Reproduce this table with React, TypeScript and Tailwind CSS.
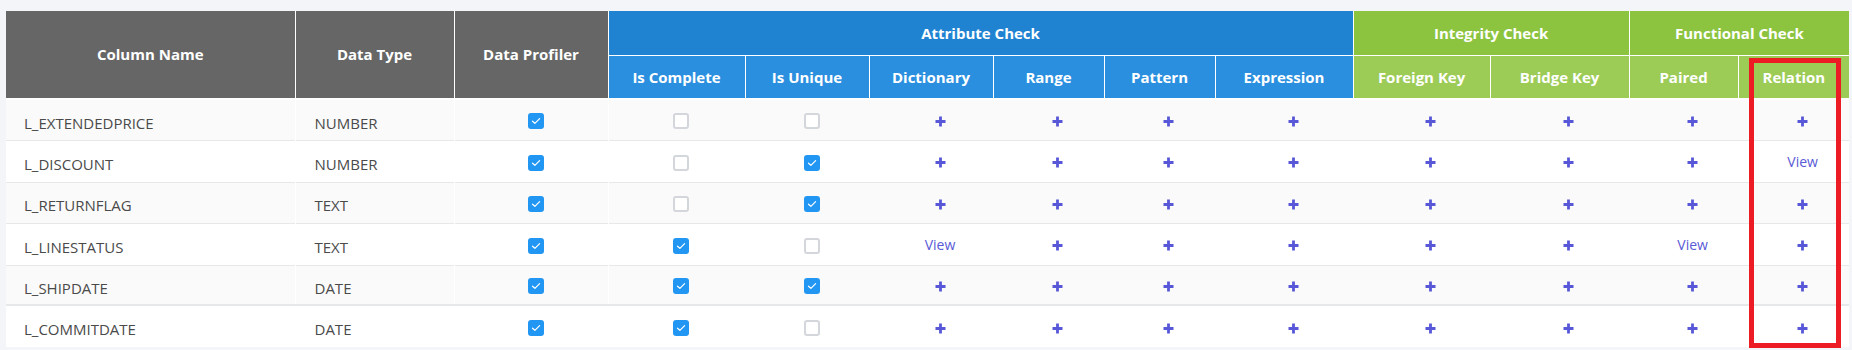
import React from 'react';

type Cell = 'on' | 'off' | 'plus' | 'view';

interface Row {
  name: string;
  type: string;
  cells: Cell[];
}

// widths in px, measured off the reference
const widths = [289, 159, 154, 137, 124, 124, 111, 111, 138, 137, 139, 109, 111];

const rows: Row[] = [
  { name: 'L_EXTENDEDPRICE', type: 'NUMBER', cells: ['on', 'off', 'off', 'plus', 'plus', 'plus', 'plus', 'plus', 'plus', 'plus', 'plus'] },
  { name: 'L_DISCOUNT', type: 'NUMBER', cells: ['on', 'off', 'on', 'plus', 'plus', 'plus', 'plus', 'plus', 'plus', 'plus', 'view'] },
  { name: 'L_RETURNFLAG', type: 'TEXT', cells: ['on', 'off', 'on', 'plus', 'plus', 'plus', 'plus', 'plus', 'plus', 'plus', 'plus'] },
  { name: 'L_LINESTATUS', type: 'TEXT', cells: ['on', 'on', 'off', 'view', 'plus', 'plus', 'plus', 'plus', 'plus', 'view', 'plus'] },
  { name: 'L_SHIPDATE', type: 'DATE', cells: ['on', 'on', 'on', 'plus', 'plus', 'plus', 'plus', 'plus', 'plus', 'plus', 'plus'] },
  { name: 'L_COMMITDATE', type: 'DATE', cells: ['on', 'on', 'off', 'plus', 'plus', 'plus', 'plus', 'plus', 'plus', 'plus', 'plus'] },
];

// row pitch in the reference is ~41.6px, so alternate
const rowHeights = ['h-[41px]', 'h-[42px]', 'h-[41px]', 'h-[42px]', 'h-[40px]', 'h-[42px]'];

const Checkbox = ({ checked }: { checked: boolean }) =>
  checked ? (
    <span className="inline-flex w-4 h-4 rounded-[3px] bg-[#2196f3] items-center justify-center align-middle">
      <svg width="10" height="8" viewBox="0 0 10 8" fill="none">
        <path d="M1.5 4.2 L3.9 6.3 L8.6 1.6" stroke="#ffffff" strokeWidth="1.2" strokeLinecap="round" strokeLinejoin="round" />
      </svg>
    </span>
  ) : (
    <span className="inline-block w-4 h-4 rounded-[3px] bg-white border-2 border-[#d3d6db] align-middle" />
  );

const Plus = () => (
  <svg width="11" height="11" viewBox="0 0 11 11" className="inline-block align-middle">
    <path d="M5.5 0.5v10M0.5 5.5h10" stroke="#5757d8" strokeWidth="2.8" />
  </svg>
);

const renderCell = (c: Cell) => {
  if (c === 'on') return <Checkbox checked />;
  if (c === 'off') return <Checkbox checked={false} />;
  if (c === 'view') return <span className="text-[14px] text-[#5a5ad6]">View</span>;
  return <Plus />;
};

const subBlue = ['Is Complete', 'Is Unique', 'Dictionary', 'Range', 'Pattern', 'Expression'];
const subGreen1 = ['Foreign Key', 'Bridge Key'];
const subGreen2 = ['Paired', 'Relation'];

export default function App() {
  return (
    <div className="relative min-h-screen bg-[#f3f5f8] pl-[6px] pt-[11px] font-['Open_Sans',sans-serif]">
      <table className="table-fixed border-collapse w-[1843px]">
        <colgroup>
          {widths.map((w, i) => (
            <col key={i} style={{ width: w }} />
          ))}
        </colgroup>
        <thead className="text-white text-[15px] font-semibold">
          <tr className="h-[44px]">
            <th rowSpan={2} className="bg-[#666666] border-r border-b-2 border-white">Column Name</th>
            <th rowSpan={2} className="bg-[#666666] border-r border-b-2 border-white">Data Type</th>
            <th rowSpan={2} className="bg-[#666666] border-r border-b-2 border-white">Data Profiler</th>
            <th colSpan={6} className="bg-[#2083d2] border-r border-b border-white">Attribute Check</th>
            <th colSpan={2} className="bg-[#8cc43f] border-r border-b border-white">Integrity Check</th>
            <th colSpan={2} className="bg-[#8cc43f] border-b border-white">Functional Check</th>
          </tr>
          <tr className="h-[44px]">
            {subBlue.map((h) => (
              <th key={h} className="bg-[#2a8fdf] border-r border-b-2 border-white">{h}</th>
            ))}
            {subGreen1.map((h) => (
              <th key={h} className="bg-[#9ccb56] border-r border-b-2 border-white">{h}</th>
            ))}
            {subGreen2.map((h, i) => (
              <th key={h} className={`bg-[#9ccb56] border-b-2 border-white ${i === 0 ? 'border-r' : ''}`}>{h}</th>
            ))}
          </tr>
        </thead>
        <tbody className="text-[15px] text-[#4a4a4a]">
          {rows.map((r, ri) => (
            <tr
              key={r.name}
              className={`${rowHeights[ri]} border-t border-[#e7e8ea] ${ri % 2 === 0 ? 'bg-[#fafafa]' : 'bg-white'} ${ri === 4 ? 'border-b-2' : ''}`}
            >
              <td className="pl-[18px] pt-[6px] border-r border-r-white">{r.name}</td>
              <td className="pl-[19px] pt-[6px] border-r border-r-white">{r.type}</td>
              {r.cells.map((c, ci) => (
                <td
                  key={ci}
                  className={`text-center ${ci < 3 ? 'pl-[9px]' : 'pl-[18px]'} ${ci === 0 ? 'border-r border-r-white' : ''}`}
                >
                  {renderCell(c)}
                </td>
              ))}
            </tr>
          ))}
        </tbody>
      </table>

      {/* annotation box around the Relation column */}
      <div className="absolute left-[1749px] top-[58px] w-[92px] h-[290px] border-[5px] border-[#ed1c24] pointer-events-none" />
    </div>
  );
}
